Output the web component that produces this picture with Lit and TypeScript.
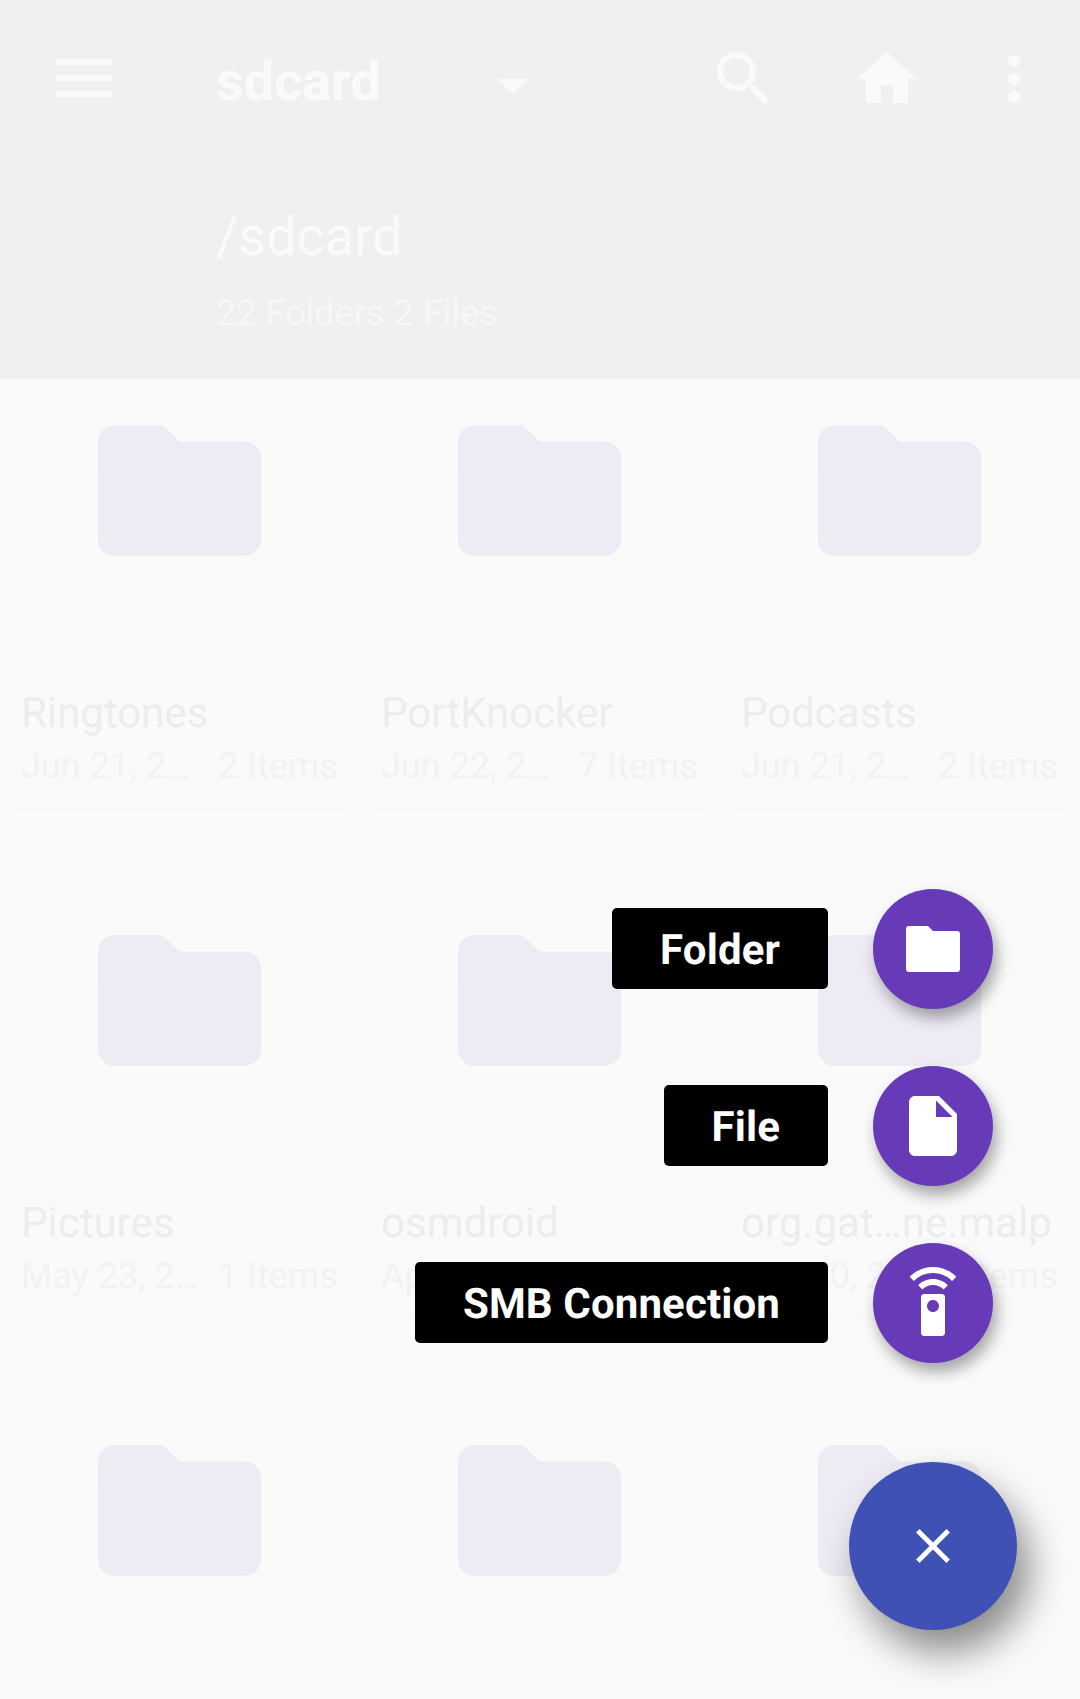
import { LitElement, html, css, svg } from "lit";
import { customElement } from "lit/decorators.js";

const FOLDER = "M10 4H4c-1.1 0-1.99.9-1.99 2L2 18c0 1.1.9 2 2 2h16c1.1 0 2-.9 2-2V8c0-1.1-.9-2-2-2h-8l-2-2z";

const cards = [
  { name: "Ringtones", date: "Jun 21, 2…", items: "2 Items" },
  { name: "PortKnocker", date: "Jun 22, 2…", items: "7 Items" },
  { name: "Podcasts", date: "Jun 21, 2…", items: "2 Items" },
  { name: "Pictures", date: "May 23, 2…", items: "1 Items" },
  { name: "osmdroid", date: "Apr 30, 2…", items: "1 Items" },
  { name: "org.gat…ne.malp", date: "Jun 20, 2…", items: "2 Items" },
  // third row runs off the bottom of the screen, only the folders show
  { name: "", date: "", items: "" },
  { name: "", date: "", items: "" },
  { name: "", date: "", items: "" },
];

const icon = (d: string) => html`<svg class="icon" viewBox="0 0 24 24"><path d=${d}></path></svg>`;

@customElement("app-root")
export class AppRoot extends LitElement {
  static styles = css`
    :host {
      display: block;
      width: 1080px;
      height: 1699px;
      position: relative;
      overflow: hidden;
      background: #fafafa;
      font-family: Roboto, "Noto Sans", sans-serif;
      text-rendering: geometricPrecision;
    }

    .header {
      height: 379px;
      box-sizing: border-box;
      padding-top: 43px;
      background: #eff0f2;
      color: #fafafa;
    }

    .toolbar {
      display: flex;
      height: 72px;
      align-items: flex-start;
    }

    .icon {
      display: block;
      width: 72px;
      height: 72px;
      fill: currentColor;
      flex: none;
    }

    .menu-icon {
      width: 56px;
      height: 38px;
      margin: 16px 0 0 56px;
      fill: currentColor;
      flex: none;
    }

    .title {
      width: 282px;
      margin-left: 104px;
      font-size: 54px;
      font-weight: 700;
      line-height: 80px;
    }

    .arrow {
      width: 30px;
      height: 15px;
      margin-top: 36px;
      fill: currentColor;
      flex: none;
    }

    .search {
      margin-left: 180px;
    }
    .home {
      margin-left: 71px;
    }
    .more {
      margin-left: 55px;
    }

    .path {
      margin: 91px 0 0 216px;
      font-size: 54px;
      font-weight: 400;
      line-height: 64px;
    }

    .count {
      margin: 21px 0 0 216px;
      font-size: 36px;
      font-weight: 400;
      line-height: 44px;
      color: #f7f7f8;
    }

    .grid {
      display: grid;
      grid-template-columns: repeat(3, 360px);
      row-gap: 79px;
    }

    .card {
      margin: 0 7.5px;
      padding: 46px 14.5px 19px;
      border-bottom: 3px solid #f8f8f8;
      border-radius: 0 0 6px 6px;
    }

    .folder {
      display: block;
      width: 163px;
      height: 131px;
      margin: 0 auto 133px;
      transform: translateX(-1px);
      fill: #eeebf5;
    }

    .name {
      margin-left: -1px;
      height: 50px;
      font-size: 42px;
      line-height: 50px;
      font-weight: 400;
      color: #ededee;
      white-space: nowrap;
    }

    .meta {
      display: flex;
      justify-content: space-between;
      margin: 5px 0 0 -1px;
      height: 44px;
      font-size: 36px;
      line-height: 44px;
      font-weight: 400;
      color: #f2f2f3;
      white-space: nowrap;
    }

    /* speed dial sits over the grid */
    .dial {
      position: absolute;
      right: 63px;
      bottom: 69px;
      display: flex;
      flex-direction: column;
      align-items: flex-end;
      gap: 57px;
    }

    .row {
      display: flex;
      align-items: center;
      gap: 45px;
      padding-right: 24px;
    }

    .label {
      height: 81px;
      margin-top: -1px;
      padding: 0 48px;
      border-radius: 5px;
      background: #000;
      color: #fff;
      font-size: 42px;
      font-weight: 700;
      line-height: 86px;
      letter-spacing: 0.13px;
    }

    .fab {
      display: flex;
      align-items: center;
      justify-content: center;
      width: 120px;
      height: 120px;
      border-radius: 50%;
      background: #673ab7;
      color: #fff;
      box-shadow: 4px 9px 15px rgba(0, 0, 0, 0.34);
    }

    .main {
      width: 168px;
      height: 168px;
      margin-top: 42px;
      background: #3f51b5;
      box-shadow: 12px 22px 38px rgba(0, 0, 0, 0.45);
    }

    .main .icon {
      width: 58px;
      height: 58px;
    }

    .small-folder {
      width: 54px;
      height: 46px;
      fill: currentColor;
    }
  `;

  render() {
    return html`
      <div class="header">
        <div class="toolbar">
          <svg class="menu-icon" viewBox="0 0 56 38">
            <rect width="56" height="6"></rect>
            <rect y="16" width="56" height="6"></rect>
            <rect y="32" width="56" height="6"></rect>
          </svg>
          <div class="title">sdcard</div>
          <svg class="arrow" viewBox="0 0 30 15"><path d="M0 0h30L15 15z"></path></svg>
          <div class="search">
            ${icon("M15.5 14h-.79l-.28-.27C15.41 12.59 16 11.11 16 9.5 16 5.91 13.09 3 9.5 3S3 5.91 3 9.5 5.91 16 9.5 16c1.61 0 3.09-.59 4.23-1.57l.27.28v.79l5 4.99L20.49 19l-4.99-5zm-6 0C7.01 14 5 11.99 5 9.5S7.01 5 9.5 5 14 7.01 14 9.5 11.99 14 9.5 14z")}
          </div>
          <div class="home">${icon("M10 20v-6h4v6h5v-8h3L12 3 2 12h3v8z")}</div>
          <div class="more">
            ${icon("M12 8c1.1 0 2-.9 2-2s-.9-2-2-2-2 .9-2 2 .9 2 2 2zm0 2c-1.1 0-2 .9-2 2s.9 2 2 2 2-.9 2-2-.9-2-2-2zm0 6c-1.1 0-2 .9-2 2s.9 2 2 2 2-.9 2-2-.9-2-2-2z")}
          </div>
        </div>
        <div class="path">/sdcard</div>
        <div class="count">22 Folders 2 Files</div>
      </div>

      <div class="grid">
        ${cards.map(
          (c) => html`
            <div class="card">
              <svg class="folder" viewBox="2 4 20 16">${svg`<path d=${FOLDER}></path>`}</svg>
              <div class="name">${c.name}</div>
              <div class="meta"><span>${c.date}</span><span>${c.items}</span></div>
            </div>
          `
        )}
      </div>

      <div class="dial">
        <div class="row">
          <div class="label">Folder</div>
          <div class="fab">
            <svg class="small-folder" viewBox="0 0 54 46">
              <path d="M3 0H22L27 5H51a3 3 0 0 1 3 3V43a3 3 0 0 1-3 3H3a3 3 0 0 1-3-3V3a3 3 0 0 1 3-3z"></path>
            </svg>
          </div>
        </div>
        <div class="row">
          <div class="label">File</div>
          <div class="fab">
            ${icon("M6 2c-1.1 0-1.99.9-1.99 2L4 20c0 1.1.89 2 1.99 2H18c1.1 0 2-.9 2-2V8l-6-6H6zm7 7V3.5L18.5 9H13z")}
          </div>
        </div>
        <div class="row">
          <div class="label">SMB Connection</div>
          <div class="fab">
            ${icon("M15 9H9c-.55 0-1 .45-1 1v12c0 .55.45 1 1 1h6c.55 0 1-.45 1-1V10c0-.55-.45-1-1-1zm-3 6c-1.1 0-2-.9-2-2s.9-2 2-2 2 .9 2 2-.9 2-2 2zM7.05 6.05l1.41 1.41C9.37 6.56 10.62 6 12 6s2.63.56 3.54 1.46l1.41-1.41C15.68 4.78 13.93 4 12 4s-3.68.78-4.95 2.05zM12 0C8.96 0 6.21 1.23 4.22 3.22l1.41 1.41C7.26 3.01 9.51 2 12 2s4.74 1.01 6.36 2.64l1.41-1.41C17.79 1.23 15.04 0 12 0z")}
          </div>
        </div>
        <div class="fab main">
          ${icon("M19 6.41L17.59 5 12 10.59 6.41 5 5 6.41 10.59 12 5 17.59 6.41 19 12 13.41 17.59 19 19 17.59 13.41 12z")}
        </div>
      </div>
    `;
  }
}
